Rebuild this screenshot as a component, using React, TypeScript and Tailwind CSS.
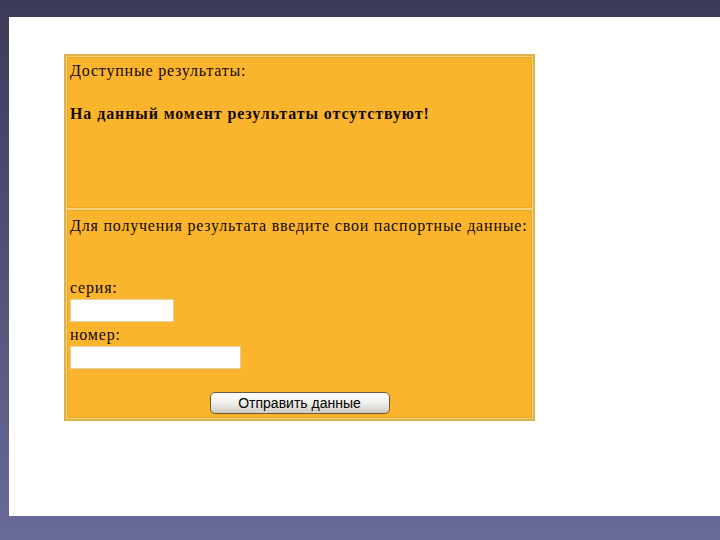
import React from "react";

export default function App() {
  return (
    <div className="w-[720px] h-[540px] bg-gradient-to-b from-[#3b3b58] to-[#6a6a99] overflow-hidden">
      <div className="ml-[9px] mt-[17px] h-[499px] bg-white pt-[37px] pl-[55px]">
        <div
          className="w-[471px] border-2 border-[#dcb24c] bg-[#f8d27a] p-[1px] text-[16px] tracking-[0.8px] text-[#100800]"
          style={{ fontFamily: '"Liberation Serif", "Times New Roman", serif' }}
        >
          {/* results cell */}
          <div className="h-[151px] bg-[#fbb52c] border border-[#e8a828] px-[2px] pt-[4px] leading-[18px]">
            <p>Доступные результаты:</p>
            <p className="mt-[25px] font-bold tracking-[0.9px]">На данный момент результаты отсутствуют!</p>
          </div>

          {/* form cell */}
          <div className="mt-[2px] h-[208px] bg-[#fbb52c] border border-[#e8a828] px-[2px] pt-[6px] leading-[18px]">
            <p className="whitespace-nowrap">Для получения результата введите свои паспортные данные:</p>
            <div className="mt-[44px]">серия:</div>
            <input
              type="text"
              className="block mt-[2px] w-[104px] h-[23px] bg-white border border-[#e0d0a0] outline-none"
            />
            <div className="mt-[4px]">номер:</div>
            <input
              type="text"
              className="block mt-[2px] w-[171px] h-[23px] bg-white border border-[#e0d0a0] outline-none"
            />
            <div className="mt-[23px] flex justify-center">
              <button
                className="w-[180px] h-[22px] rounded-[5px] border border-[#6b5a3a] bg-gradient-to-b from-white via-[#efefea] to-[#cfccc0] text-[14px] tracking-normal leading-none text-black"
                style={{ fontFamily: '"Liberation Sans", Arial, sans-serif' }}
              >
                Отправить данные
              </button>
            </div>
          </div>
        </div>
      </div>
    </div>
  );
}
